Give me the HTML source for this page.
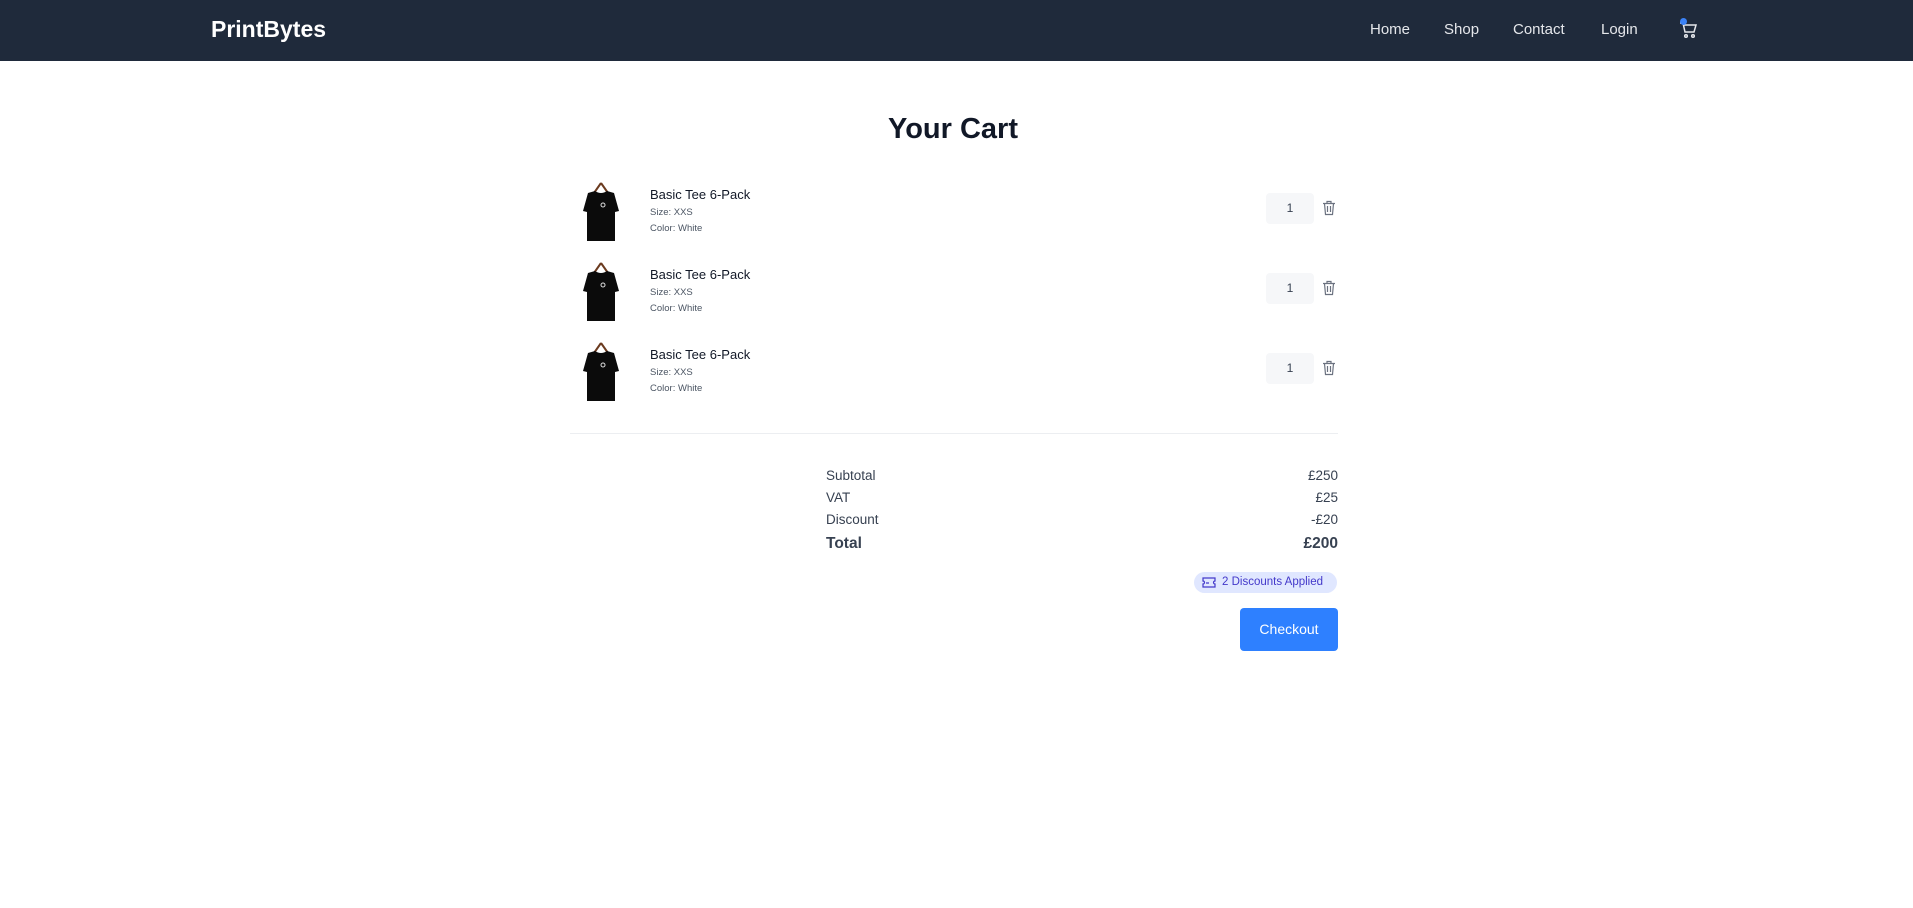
<!DOCTYPE html>
<html><head><meta charset="utf-8"><style>
*{box-sizing:border-box;margin:0;padding:0}
body{width:1913px;height:908px;background:#fff;font-family:"Liberation Sans",sans-serif;color:#111827;position:relative;overflow:hidden}
nav{position:absolute;left:0;top:0;width:1913px;height:61px;background:#1f2a3b}
.logo{position:absolute;left:211px;top:16px;color:#fff;font-weight:bold;font-size:23px}
.nl{position:absolute;top:21px;color:#e5e7eb;font-size:15px}
h1{position:absolute;left:0;width:1906px;text-align:center;top:113px;font-size:29px;font-weight:bold;color:#111827}
.row{position:absolute;left:570px;width:768px;height:80px}
.shirt{position:absolute;left:8px;top:0}
.name{position:absolute;left:80px;top:6px;font-size:13px;color:#111827}
.sz{position:absolute;left:80px;top:26px;font-size:9.5px;color:#4b5563}
.cl{position:absolute;left:80px;top:42px;font-size:9.5px;color:#4b5563}
.qty{position:absolute;left:696px;top:12px;width:48px;height:31px;background:#f6f7f9;border-radius:4px;text-align:center;line-height:31px;font-size:12px;color:#374151}
.trash{position:absolute;left:752px;top:19px}
.line{position:absolute;left:570px;top:433px;width:768px;height:1px;background:#eceef1}
.s{position:absolute;left:826px;width:512px;font-size:13.5px;color:#374151}
.s span{position:absolute;right:0}
.badge{position:absolute;left:1194px;top:572px;width:143px;height:21px;background:#e0e7ff;border-radius:11px;color:#4338ca;font-size:11.5px;line-height:21px;padding-left:28px}
.btn{position:absolute;left:1240px;top:608px;width:98px;height:43px;background:#2e80ff;border-radius:4px;color:#fff;font-size:14px;text-align:center;line-height:43px}
</style></head><body>
<nav>
<div class="logo">PrintBytes</div>
<div class="nl" style="left:1370px">Home</div>
<div class="nl" style="left:1444px">Shop</div>
<div class="nl" style="left:1513px">Contact</div>
<div class="nl" style="left:1601px">Login</div>
<svg style="position:absolute;left:1678px;top:18px" width="20" height="22" viewBox="0 0 20 22" fill="none" stroke="#e5e7eb" stroke-width="1.5"><path d="M2 5h3l2 9h9l2-7H6"/><circle cx="8" cy="18" r="1.3"/><circle cx="15" cy="18" r="1.3"/></svg>
<div style="position:absolute;left:1680px;top:18px;width:7px;height:7px;border-radius:50%;background:#3b82f6"></div>
</nav>
<h1>Your Cart</h1>
<div class="row" style="top:181px">
<svg class="shirt" width="46" height="62" viewBox="0 0 46 62"><path d="M23 2 L16 12 M23 2 L30 12" stroke="#6b3a1f" stroke-width="2"/><path d="M10 12 L17 10 Q23 14 29 10 L36 12 L41 30 L37 31 L37 60 L9 60 L9 31 L5 30 Z" fill="#0b0b0b"/><circle cx="25" cy="24" r="2" fill="none" stroke="#ddd" stroke-width="1"/></svg>
<div class="name">Basic Tee 6-Pack</div><div class="sz">Size: XXS</div><div class="cl">Color: White</div>
<div class="qty">1</div>
<svg class="trash" width="14" height="16" viewBox="0 0 14 16" fill="none" stroke="#6b7280" stroke-width="1.2"><path d="M1 3.5h12M5 3.5V1.5h4v2M2.5 3.5l1 11h7l1-11M5.5 6v6M8.5 6v6"/></svg>
</div>
<div class="row" style="top:261px">
<svg class="shirt" width="46" height="62" viewBox="0 0 46 62"><path d="M23 2 L16 12 M23 2 L30 12" stroke="#6b3a1f" stroke-width="2"/><path d="M10 12 L17 10 Q23 14 29 10 L36 12 L41 30 L37 31 L37 60 L9 60 L9 31 L5 30 Z" fill="#0b0b0b"/><circle cx="25" cy="24" r="2" fill="none" stroke="#ddd" stroke-width="1"/></svg>
<div class="name">Basic Tee 6-Pack</div><div class="sz">Size: XXS</div><div class="cl">Color: White</div>
<div class="qty">1</div>
<svg class="trash" width="14" height="16" viewBox="0 0 14 16" fill="none" stroke="#6b7280" stroke-width="1.2"><path d="M1 3.5h12M5 3.5V1.5h4v2M2.5 3.5l1 11h7l1-11M5.5 6v6M8.5 6v6"/></svg>
</div>
<div class="row" style="top:341px">
<svg class="shirt" width="46" height="62" viewBox="0 0 46 62"><path d="M23 2 L16 12 M23 2 L30 12" stroke="#6b3a1f" stroke-width="2"/><path d="M10 12 L17 10 Q23 14 29 10 L36 12 L41 30 L37 31 L37 60 L9 60 L9 31 L5 30 Z" fill="#0b0b0b"/><circle cx="25" cy="24" r="2" fill="none" stroke="#ddd" stroke-width="1"/></svg>
<div class="name">Basic Tee 6-Pack</div><div class="sz">Size: XXS</div><div class="cl">Color: White</div>
<div class="qty">1</div>
<svg class="trash" width="14" height="16" viewBox="0 0 14 16" fill="none" stroke="#6b7280" stroke-width="1.2"><path d="M1 3.5h12M5 3.5V1.5h4v2M2.5 3.5l1 11h7l1-11M5.5 6v6M8.5 6v6"/></svg>
</div>
<div class="line"></div>
<div class="s" style="top:468px">Subtotal<span>£250</span></div>
<div class="s" style="top:490px">VAT<span>£25</span></div>
<div class="s" style="top:512px">Discount<span>-£20</span></div>
<div class="s" style="top:535px;font-size:15.5px;font-weight:bold">Total<span>£200</span></div>
<div class="badge"><svg style="position:absolute;left:8px;top:5px" width="14" height="11" viewBox="0 0 14 11" fill="none" stroke="#4338ca" stroke-width="1.2"><path d="M1 1h12v3a1.5 1.5 0 0 0 0 3v3H1V7a1.5 1.5 0 0 0 0-3z M4 6h3"/></svg>2 Discounts Applied</div>
<div class="btn">Checkout</div>
</body></html>
